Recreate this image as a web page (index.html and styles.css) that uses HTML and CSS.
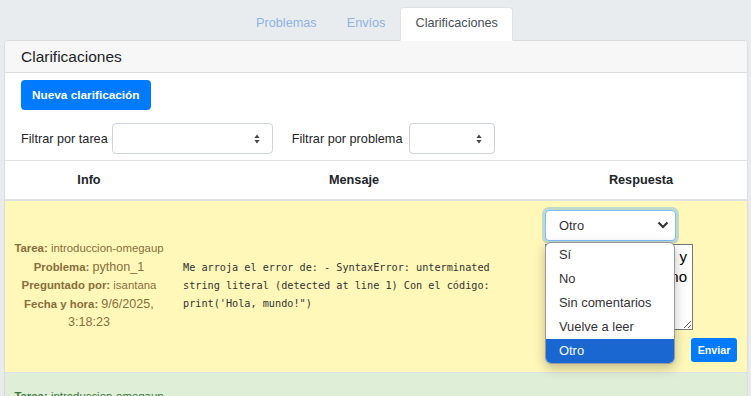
FILE: index.html
```html
<!DOCTYPE html>
<html lang="es">
<head>
  <meta charset="UTF-8" />
  <meta name="viewport" content="width=device-width, initial-scale=1.0" />
  <title>Clarificaciones</title>
  <link rel="stylesheet" href="styles.css">
</head>
<body>
  <ul class="tabs">
    <li class="tab">Problemas</li>
    <li class="tab">Envíos</li>
    <li class="tab active">Clarificaciones</li>
  </ul>

  <div class="card">
    <div class="card-header">Clarificaciones</div>
    <div class="card-body">
      <button class="btn btn-primary">Nueva clarificación</button>
      <div class="filters">
        <label class="filter">Filtrar por tarea
          <span class="select select-wide">
            <svg class="updown" width="6" height="10" viewBox="0 0 6 10"><path d="M3 0.5 L5.6 4 L0.4 4 Z M3 9.5 L5.6 6 L0.4 6 Z" fill="#444"/></svg>
          </span>
        </label>
        <label class="filter">Filtrar por problema
          <span class="select select-narrow">
            <svg class="updown" width="6" height="10" viewBox="0 0 6 10"><path d="M3 0.5 L5.6 4 L0.4 4 Z M3 9.5 L5.6 6 L0.4 6 Z" fill="#444"/></svg>
          </span>
        </label>
      </div>
    </div>

    <table class="clar-table">
      <thead>
        <tr>
          <th class="col-info">Info</th>
          <th class="col-msg">Mensaje</th>
          <th class="col-resp">Respuesta</th>
        </tr>
      </thead>
      <tbody>
        <tr class="row-warning">
          <td class="info">
            <div><b>Tarea:</b> introduccion-omegaup</div>
            <div><b>Problema:</b> <span class="big">python_1</span></div>
            <div><b>Preguntado por:</b> isantana</div>
            <div><b>Fecha y hora:</b> <span class="big">9/6/2025, 3:18:23</span></div>
          </td>
          <td class="message">
            <pre>Me arroja el error de: - SyntaxError: unterminated string literal (detected at line 1) Con el código: print('Hola, mundo!")</pre>
          </td>
          <td class="response">
            <div class="answer">
              <div class="answer-select">
                <span>Otro</span>
                <svg width="12" height="8" viewBox="0 0 12 8"><path d="M1.5 1.5 L6 6 L10.5 1.5" fill="none" stroke="#333" stroke-width="2.2"/></svg>
              </div>
              <textarea class="answer-text">las comillas y
usadas no</textarea>
              <div class="answer-actions">
                <button class="btn btn-primary btn-sm">Enviar</button>
              </div>
              <ul class="dropdown">
                <li>Sí</li>
                <li>No</li>
                <li>Sin comentarios</li>
                <li>Vuelve a leer</li>
                <li class="selected">Otro</li>
              </ul>
            </div>
          </td>
        </tr>
        <tr class="row-success">
          <td class="info">
            <div><b>Tarea:</b> introduccion-omegaup</div>
            <div><b>Problema:</b> <span class="big">python_1</span></div>
          </td>
          <td class="message"></td>
          <td class="response"></td>
        </tr>
      </tbody>
    </table>
  </div>
</body>
</html>
```

FILE: styles.css
```css
:root {
  --page: #e9ecef;
  --border: #dee2e6;
  --text: #212529;
  --primary: #007bff;
  --tab-muted: #8db2df;
  --warning-bg: #fff8b9;
  --warning-text: #8a6d3b;
  --success-bg: #dfeed6;
  --success-text: #3c763d;
}

* {
  box-sizing: border-box;
}

body {
  margin: 0;
  padding: 7px 3px 0 4px;
  background-color: var(--page);
  font-family: 'Liberation Sans', Arial, sans-serif;
  font-size: 12.7px;
  color: var(--text);
  overflow: hidden;
}

.tabs {
  list-style: none;
  margin: 0;
  padding: 0;
  display: flex;
  justify-content: center;
  height: 33px;
  padding-left: 2px;
}

.tab {
  padding: 0 14px;
  line-height: 31px;
  color: var(--tab-muted);
  border: 1px solid transparent;
  border-radius: 4px 4px 0 0;
}

.tab.active {
  background: #fff;
  color: #495057;
  border-color: var(--border);
  border-bottom-color: #fff;
  height: 34px;
  position: relative;
  z-index: 1;
}

.card {
  background: #fff;
  border: 1px solid #dcdcdc;
  border-radius: 4px 4px 0 0;
  height: 400px;
}

.card-header {
  background: #f7f7f7;
  border-bottom: 1px solid #dcdcdc;
  padding: 0 16px;
  height: 32px;
  line-height: 32px;
  font-size: 15.5px;
  border-radius: 4px 4px 0 0;
}

.card-body {
  padding: 7px 16px 6px;
}

.btn {
  font-family: inherit;
  border: none;
  border-radius: 4px;
  cursor: pointer;
}

.btn-primary {
  background: var(--primary);
  color: #fff;
  font-size: 11.8px;
  font-weight: bold;
  height: 30px;
  padding: 0 11px;
}

.btn-sm {
  font-size: 10.7px;
  height: 24px;
  width: 46px;
  padding: 0;
  border-radius: 3px;
}

.filters {
  display: flex;
  gap: 19px;
  margin-top: 13px;
}

.filter {
  display: flex;
  align-items: center;
  gap: 4px;
}

.select {
  display: inline-block;
  height: 31px;
  border: 1px solid #ced4da;
  border-radius: 4px;
  background: #fff;
  position: relative;
}

.updown {
  position: absolute;
  right: 12px;
  top: 10px;
}

.select-wide {
  width: 161px;
}

.select-narrow {
  width: 86px;
  margin-left: 3px;
}

.clar-table {
  width: 100%;
  border-collapse: collapse;
  table-layout: fixed;
}

.clar-table th {
  height: 39px;
  border-top: 1px solid var(--border);
  border-bottom: 2px solid var(--border);
  font-weight: bold;
  text-align: center;
  vertical-align: middle;
}

.col-info {
  width: 168px;
}

.col-resp {
  width: 212px;
}

.clar-table td {
  padding: 9px 10px 10px;
  border-top: 1px solid var(--border);
  vertical-align: middle;
}

.clar-table td.info {
  padding-left: 3px;
  padding-right: 3px;
}

.row-warning {
  background: var(--warning-bg);
  color: var(--warning-text);
}

.row-success {
  background: var(--success-bg);
  color: var(--success-text);
}

.info {
  text-align: center;
  font-size: 11.4px;
  line-height: 18.5px;
}

.info .big {
  font-size: 12.6px;
}

.message pre {
  margin: 0;
  max-width: 53ch;
  white-space: pre-wrap;
  font-family: 'DejaVu Sans Mono', 'Liberation Mono', monospace;
  font-size: 10.2px;
  line-height: 18px;
  color: #333;
}

.row-success td {
  height: 60px;
  vertical-align: top;
  padding-top: 14px;
}

.response {
  vertical-align: top !important;
}

.answer {
  position: relative;
}

.answer-select {
  width: 131px;
  height: 31px;
  display: flex;
  align-items: center;
  justify-content: space-between;
  padding: 0 6px 0 13px;
  background: #fff;
  color: #333;
  font-size: 12.9px;
  border: 1px solid #80bdff;
  border-radius: 4px;
  box-shadow: 0 0 0 3px rgba(0, 123, 255, 0.25);
}

.answer-text {
  display: block;
  width: 148px;
  height: 86px;
  margin-top: 3px;
  border: 1px solid #767676;
  background: #fff;
  font-family: 'Liberation Sans', Arial, sans-serif;
  font-size: 15px;
  line-height: 20px;
  color: #000;
  padding: 2px 5px 2px 2px;
  resize: vertical;
  text-align: right;
}

.answer-actions {
  display: flex;
  justify-content: flex-end;
  margin-top: 8px;
}

.dropdown {
  position: absolute;
  top: 32px;
  left: 0;
  width: 130px;
  margin: 0;
  padding: 0;
  list-style: none;
  background: #fff;
  border: 1px solid #9a9a9a;
  border-radius: 6px;
  overflow: hidden;
  box-shadow: 0 4px 12px rgba(0, 0, 0, 0.25);
  color: #333;
  font-size: 12.9px;
}

.dropdown li {
  height: 24px;
  line-height: 24px;
  padding-left: 13px;
}

.dropdown li.selected {
  background: #1a67d2;
  color: #fff;
}
```
